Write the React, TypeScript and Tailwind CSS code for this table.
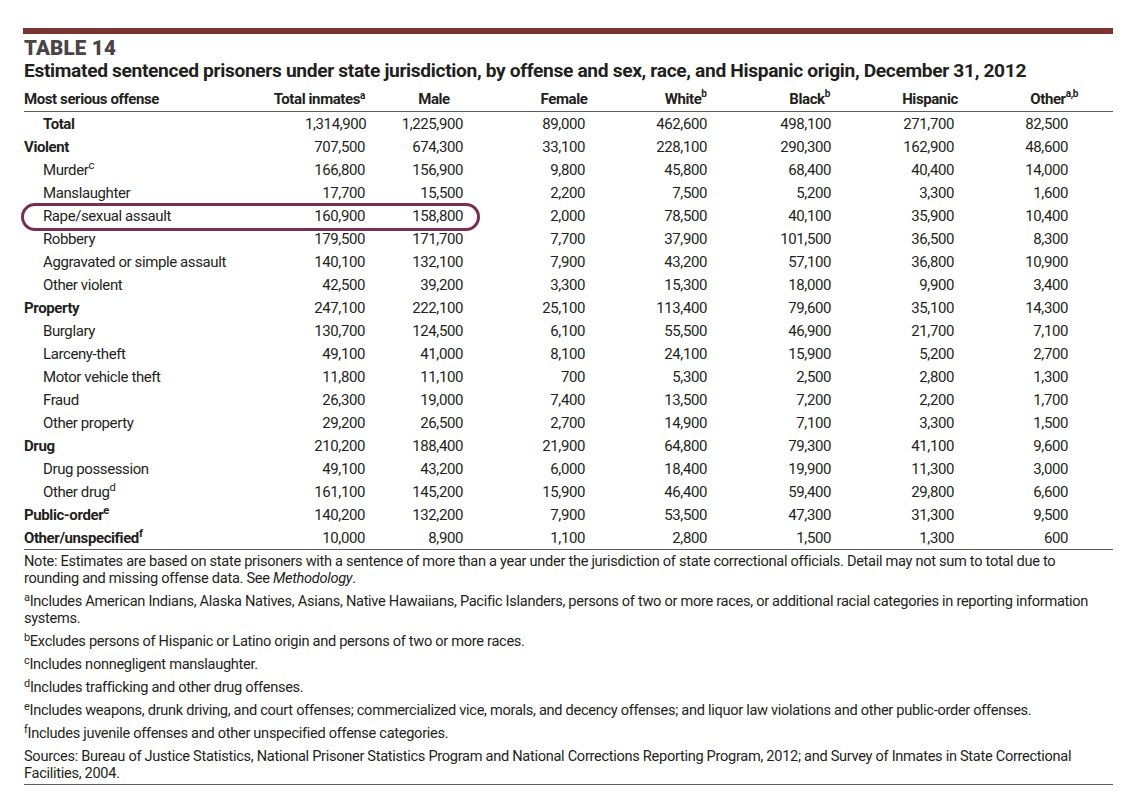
import React from "react";

type Row = { label: React.ReactNode; bold?: boolean; indent?: boolean; v: string[]; circle?: boolean };

const rows: Row[] = [
  { label: "Total", bold: true, indent: true, v: ["1,314,900", "1,225,900", "89,000", "462,600", "498,100", "271,700", "82,500"] },
  { label: "Violent", bold: true, v: ["707,500", "674,300", "33,100", "228,100", "290,300", "162,900", "48,600"] },
  { label: <>Murder<sup>c</sup></>, indent: true, v: ["166,800", "156,900", "9,800", "45,800", "68,400", "40,400", "14,000"] },
  { label: "Manslaughter", indent: true, v: ["17,700", "15,500", "2,200", "7,500", "5,200", "3,300", "1,600"] },
  { label: "Rape/sexual assault", indent: true, circle: true, v: ["160,900", "158,800", "2,000", "78,500", "40,100", "35,900", "10,400"] },
  { label: "Robbery", indent: true, v: ["179,500", "171,700", "7,700", "37,900", "101,500", "36,500", "8,300"] },
  { label: "Aggravated or simple assault", indent: true, v: ["140,100", "132,100", "7,900", "43,200", "57,100", "36,800", "10,900"] },
  { label: "Other violent", indent: true, v: ["42,500", "39,200", "3,300", "15,300", "18,000", "9,900", "3,400"] },
  { label: "Property", bold: true, v: ["247,100", "222,100", "25,100", "113,400", "79,600", "35,100", "14,300"] },
  { label: "Burglary", indent: true, v: ["130,700", "124,500", "6,100", "55,500", "46,900", "21,700", "7,100"] },
  { label: "Larceny-theft", indent: true, v: ["49,100", "41,000", "8,100", "24,100", "15,900", "5,200", "2,700"] },
  { label: "Motor vehicle theft", indent: true, v: ["11,800", "11,100", "700", "5,300", "2,500", "2,800", "1,300"] },
  { label: "Fraud", indent: true, v: ["26,300", "19,000", "7,400", "13,500", "7,200", "2,200", "1,700"] },
  { label: "Other property", indent: true, v: ["29,200", "26,500", "2,700", "14,900", "7,100", "3,300", "1,500"] },
  { label: "Drug", bold: true, v: ["210,200", "188,400", "21,900", "64,800", "79,300", "41,100", "9,600"] },
  { label: "Drug possession", indent: true, v: ["49,100", "43,200", "6,000", "18,400", "19,900", "11,300", "3,000"] },
  { label: <>Other drug<sup>d</sup></>, indent: true, v: ["161,100", "145,200", "15,900", "46,400", "59,400", "29,800", "6,600"] },
  { label: <>Public-order<sup>e</sup></>, bold: true, v: ["140,200", "132,200", "7,900", "53,500", "47,300", "31,300", "9,500"] },
  { label: <>Other/unspecified<sup>f</sup></>, bold: true, v: ["10,000", "8,900", "1,100", "2,800", "1,500", "1,300", "600"] },
];

const colW = ["w-[60px]", "w-[98px]", "w-[122px]", "w-[122px]", "w-[124px]", "w-[123px]", "w-[114px]"];

function Head({ box, text, sup }: { box: string; text: string; sup?: string }) {
  return (
    <div className={`ml-auto flex justify-center ${box}`}>
      <span className="relative whitespace-nowrap">
        {text}
        {sup && <sup className="absolute left-full top-[6px] text-[10px]">{sup}</sup>}
      </span>
    </div>
  );
}

export default function App() {
  return (
    <div className="w-[1130px] h-[799px] bg-white pt-[28px] pl-[23px] pr-[17px] font-['Roboto',sans-serif] text-[#231f20]">
      <div className="h-[6px] bg-[#7a3530]" />
      <div className="pl-[1px]">
        <div className="mt-[3px] h-[22px] text-[20.5px] leading-[22px] font-black text-[#4a4444] tracking-[0.2px]">TABLE 14</div>
        <div className="h-[24px] text-[19.2px] leading-[24px] font-bold tracking-[-0.35px] whitespace-nowrap">
          Estimated sentenced prisoners under state jurisdiction, by offense and sex, race, and Hispanic origin, December 31, 2012
        </div>

        <div className="mt-[5px] text-[15px] tracking-[-0.4px]">
          <div className="flex h-[24px] items-end pb-[1px] border-b border-[#5c5c5c] font-bold">
            <div className="w-[281px]">Most serious offense</div>
            <div className={`${colW[0]} flex justify-end whitespace-nowrap`}>
              <span>Total inmates<sup className="text-[10px]">a</sup></span>
            </div>
            <div className={`${colW[1]}`}><Head box="w-[58px]" text="Male" /></div>
            <div className={`${colW[2]}`}><Head box="w-[42px]" text="Female" /></div>
            <div className={`${colW[3]}`}><Head box="w-[48px]" text="White" sup="b" /></div>
            <div className={`${colW[4]}`}><Head box="w-[48px]" text="Black" sup="b" /></div>
            <div className={`${colW[5]}`}><Head box="w-[48px]" text="Hispanic" /></div>
            <div className={`${colW[6]}`}><Head box="w-[40px]" text="Other" sup="a,b" /></div>
          </div>

          <div className="border-b border-[#5c5c5c]">
            {rows.map((r, i) => (
              <div key={i} className="relative flex h-[23px] items-center pt-[1px]">
                {r.circle && (
                  <div className="absolute left-[-3px] top-[-1px] h-[28px] w-[459px] rounded-full border-[3px] border-[#7a2d52]" />
                )}
                <div className={`w-[281px] whitespace-nowrap ${r.indent ? "pl-[19px]" : ""} ${r.bold ? "font-bold" : ""}`}>{r.label}</div>
                {r.v.map((n, j) => (
                  <div key={j} className={`${colW[j]} text-right`}>{n}</div>
                ))}
              </div>
            ))}
          </div>
        </div>

        <div className="pt-[3px] pb-[2px] border-b border-[#5c5c5c] text-[14.6px] leading-[17px] tracking-[-0.3px] flex flex-col gap-[6px] whitespace-nowrap">
          <p>
            Note: Estimates are based on state prisoners with a sentence of more than a year under the jurisdiction of state correctional officials. Detail may not sum to total due to
            <br />
            rounding and missing offense data. See <i>Methodology</i>.
          </p>
          <p>
            <sup>a</sup>Includes American Indians, Alaska Natives, Asians, Native Hawaiians, Pacific Islanders, persons of two or more races, or additional racial categories in reporting information
            <br />
            systems.
          </p>
          <p><sup>b</sup>Excludes persons of Hispanic or Latino origin and persons of two or more races.</p>
          <p><sup>c</sup>Includes nonnegligent manslaughter.</p>
          <p><sup>d</sup>Includes trafficking and other drug offenses.</p>
          <p><sup>e</sup>Includes weapons, drunk driving, and court offenses; commercialized vice, morals, and decency offenses; and liquor law violations and other public-order offenses.</p>
          <p><sup>f</sup>Includes juvenile offenses and other unspecified offense categories.</p>
          <p>
            Sources: Bureau of Justice Statistics, National Prisoner Statistics Program and National Corrections Reporting Program, 2012; and Survey of Inmates in State Correctional
            <br />
            Facilities, 2004.
          </p>
        </div>
      </div>
    </div>
  );
}
